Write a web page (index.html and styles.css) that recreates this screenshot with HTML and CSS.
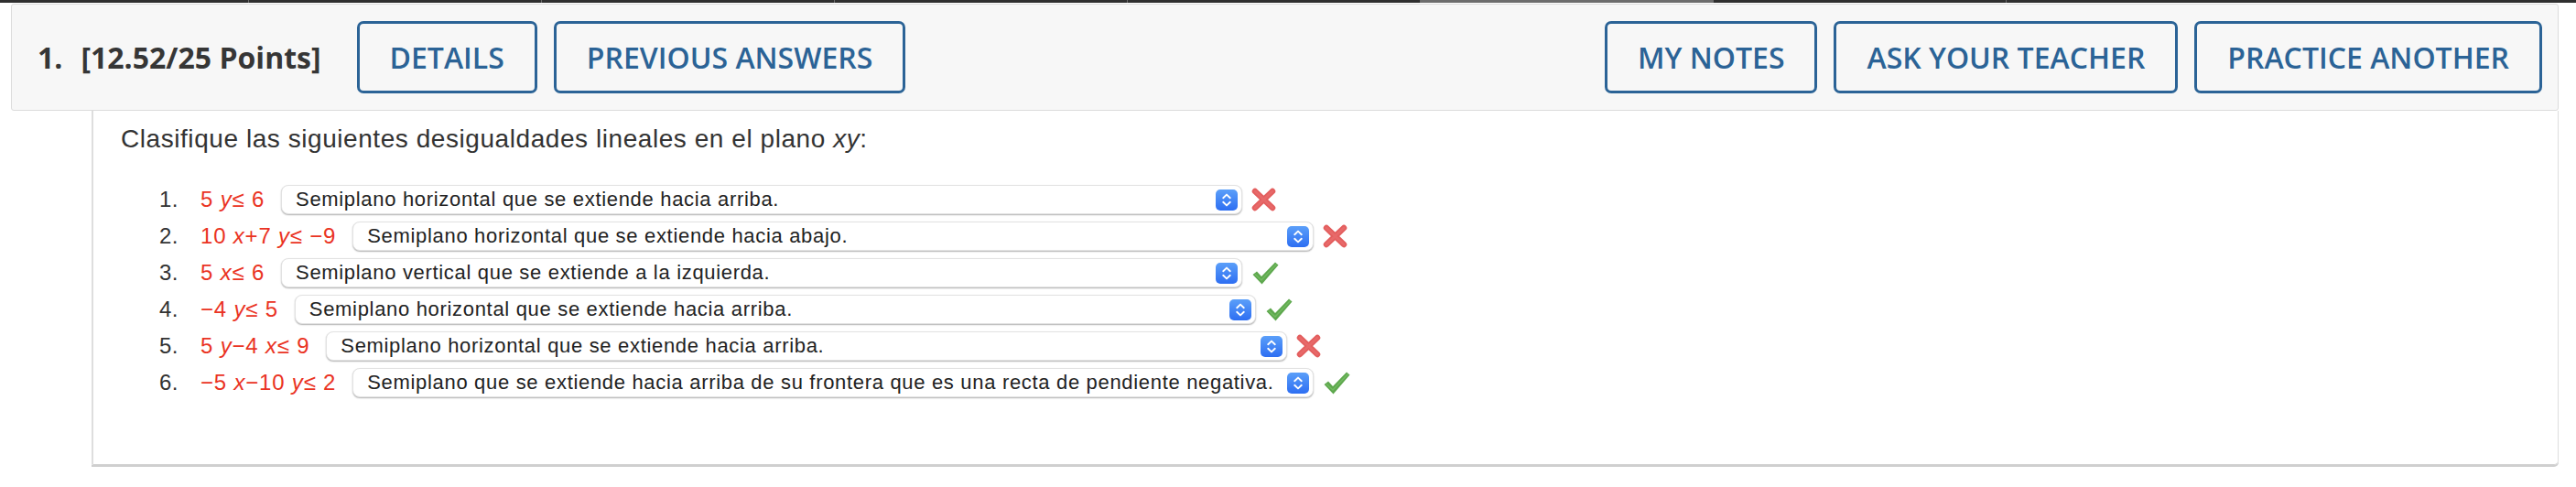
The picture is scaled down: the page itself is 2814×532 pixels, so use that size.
FILE: index.html
```html
<!DOCTYPE html>
<html lang="es">
<head>
<meta charset="utf-8">
<title>Pregunta 1</title>
<link rel="stylesheet" href="styles.css">
</head>
<body>
<div class="topbar">
  <span class="seg seg-first"></span>
  <span class="seg"></span>
  <span class="seg"></span>
  <span class="seg"></span>
  <span class="seg"></span>
  <span class="seg seg-light"></span>
  <span class="seg"></span>
  <span class="seg seg-last"></span>
</div>
<div class="wrap">
  <div class="header">
    <div class="header-left">
      <div class="qtitle"><span class="qnum">1.</span><span>[12.52/25 Points]</span></div>
      <button class="btn">DETAILS</button>
      <button class="btn">PREVIOUS ANSWERS</button>
    </div>
    <div class="header-right">
      <button class="btn">MY NOTES</button>
      <button class="btn">ASK YOUR TEACHER</button>
      <button class="btn">PRACTICE ANOTHER</button>
    </div>
  </div>
  <div class="card">
    <p class="prompt">Clasifique las siguientes desigualdades lineales en el plano <i>xy</i>:</p>
    <ol class="items">
      <li class="item">
        <span class="num">1.</span>
        <span class="math">5 <i>y</i>≤ 6</span>
        <div class="select"><span class="opt">Semiplano horizontal que se extiende hacia arriba.</span>
          <svg class="stepper" viewBox="0 0 24 23" width="24" height="23"><defs><linearGradient id="g1" x1="0" y1="0" x2="0" y2="1"><stop offset="0" stop-color="#5b9ff9"/><stop offset="1" stop-color="#2d6ef2"/></linearGradient></defs><rect x="0" y="0" width="24" height="23" rx="5" fill="url(#g1)"/><polyline points="8.2,9.2 12,5.6 15.8,9.2" fill="none" stroke="#fff" stroke-width="1.9" stroke-linecap="round" stroke-linejoin="round"/><polyline points="8.2,13.8 12,17.4 15.8,13.8" fill="none" stroke="#fff" stroke-width="1.9" stroke-linecap="round" stroke-linejoin="round"/></svg>
        </div>
        <svg class="mark" viewBox="0 0 30 26" width="30" height="26"><path d="M4 4 L23 22 M23 4 L4 22" stroke="#e35d5d" stroke-width="6.5" stroke-linecap="round"/><path d="M4 4 L23 22 M23 4 L4 22" stroke="#ea7272" stroke-width="3" stroke-linecap="round" opacity="0.6"/></svg>
      </li>
      <li class="item">
        <span class="num">2.</span>
        <span class="math">10 <i>x</i>+7 <i>y</i>≤ −9</span>
        <div class="select"><span class="opt">Semiplano horizontal que se extiende hacia abajo.</span>
          <svg class="stepper" viewBox="0 0 24 23" width="24" height="23"><rect x="0" y="0" width="24" height="23" rx="5" fill="url(#g1)"/><polyline points="8.2,9.2 12,5.6 15.8,9.2" fill="none" stroke="#fff" stroke-width="1.9" stroke-linecap="round" stroke-linejoin="round"/><polyline points="8.2,13.8 12,17.4 15.8,13.8" fill="none" stroke="#fff" stroke-width="1.9" stroke-linecap="round" stroke-linejoin="round"/></svg>
        </div>
        <svg class="mark" viewBox="0 0 30 26" width="30" height="26"><path d="M4 4 L23 22 M23 4 L4 22" stroke="#e35d5d" stroke-width="6.5" stroke-linecap="round"/><path d="M4 4 L23 22 M23 4 L4 22" stroke="#ea7272" stroke-width="3" stroke-linecap="round" opacity="0.6"/></svg>
      </li>
      <li class="item">
        <span class="num">3.</span>
        <span class="math">5 <i>x</i>≤ 6</span>
        <div class="select"><span class="opt">Semiplano vertical que se extiende a la izquierda.</span>
          <svg class="stepper" viewBox="0 0 24 23" width="24" height="23"><rect x="0" y="0" width="24" height="23" rx="5" fill="url(#g1)"/><polyline points="8.2,9.2 12,5.6 15.8,9.2" fill="none" stroke="#fff" stroke-width="1.9" stroke-linecap="round" stroke-linejoin="round"/><polyline points="8.2,13.8 12,17.4 15.8,13.8" fill="none" stroke="#fff" stroke-width="1.9" stroke-linecap="round" stroke-linejoin="round"/></svg>
        </div>
        <svg class="mark" viewBox="0 0 30 26" width="30" height="26"><path d="M1.5 15 L6 11.5 L11 17 L26 1.5 L29.5 4.5 L11.5 25.5 Z" fill="#5ea84e"/><path d="M4 14.5 L11 21 L27.5 3.5" fill="none" stroke="#7cc26a" stroke-width="1.4" opacity="0.7"/></svg>
      </li>
      <li class="item">
        <span class="num">4.</span>
        <span class="math">−4 <i>y</i>≤ 5</span>
        <div class="select"><span class="opt">Semiplano horizontal que se extiende hacia arriba.</span>
          <svg class="stepper" viewBox="0 0 24 23" width="24" height="23"><rect x="0" y="0" width="24" height="23" rx="5" fill="url(#g1)"/><polyline points="8.2,9.2 12,5.6 15.8,9.2" fill="none" stroke="#fff" stroke-width="1.9" stroke-linecap="round" stroke-linejoin="round"/><polyline points="8.2,13.8 12,17.4 15.8,13.8" fill="none" stroke="#fff" stroke-width="1.9" stroke-linecap="round" stroke-linejoin="round"/></svg>
        </div>
        <svg class="mark" viewBox="0 0 30 26" width="30" height="26"><path d="M1.5 15 L6 11.5 L11 17 L26 1.5 L29.5 4.5 L11.5 25.5 Z" fill="#5ea84e"/><path d="M4 14.5 L11 21 L27.5 3.5" fill="none" stroke="#7cc26a" stroke-width="1.4" opacity="0.7"/></svg>
      </li>
      <li class="item">
        <span class="num">5.</span>
        <span class="math">5 <i>y</i>−4 <i>x</i>≤ 9</span>
        <div class="select"><span class="opt">Semiplano horizontal que se extiende hacia arriba.</span>
          <svg class="stepper" viewBox="0 0 24 23" width="24" height="23"><rect x="0" y="0" width="24" height="23" rx="5" fill="url(#g1)"/><polyline points="8.2,9.2 12,5.6 15.8,9.2" fill="none" stroke="#fff" stroke-width="1.9" stroke-linecap="round" stroke-linejoin="round"/><polyline points="8.2,13.8 12,17.4 15.8,13.8" fill="none" stroke="#fff" stroke-width="1.9" stroke-linecap="round" stroke-linejoin="round"/></svg>
        </div>
        <svg class="mark" viewBox="0 0 30 26" width="30" height="26"><path d="M4 4 L23 22 M23 4 L4 22" stroke="#e35d5d" stroke-width="6.5" stroke-linecap="round"/><path d="M4 4 L23 22 M23 4 L4 22" stroke="#ea7272" stroke-width="3" stroke-linecap="round" opacity="0.6"/></svg>
      </li>
      <li class="item">
        <span class="num">6.</span>
        <span class="math">−5 <i>x</i>−10 <i>y</i>≤ 2</span>
        <div class="select"><span class="opt">Semiplano que se extiende hacia arriba de su frontera que es una recta de pendiente negativa.</span>
          <svg class="stepper" viewBox="0 0 24 23" width="24" height="23"><rect x="0" y="0" width="24" height="23" rx="5" fill="url(#g1)"/><polyline points="8.2,9.2 12,5.6 15.8,9.2" fill="none" stroke="#fff" stroke-width="1.9" stroke-linecap="round" stroke-linejoin="round"/><polyline points="8.2,13.8 12,17.4 15.8,13.8" fill="none" stroke="#fff" stroke-width="1.9" stroke-linecap="round" stroke-linejoin="round"/></svg>
        </div>
        <svg class="mark" viewBox="0 0 30 26" width="30" height="26"><path d="M1.5 15 L6 11.5 L11 17 L26 1.5 L29.5 4.5 L11.5 25.5 Z" fill="#5ea84e"/><path d="M4 14.5 L11 21 L27.5 3.5" fill="none" stroke="#7cc26a" stroke-width="1.4" opacity="0.7"/></svg>
      </li>
    </ol>
  </div>
</div>
</body>
</html>
```
FILE: styles.css
```css
* { box-sizing: border-box; }
html, body { margin: 0; padding: 0; background: #fff; }
body { width: 2814px; height: 532px; overflow: hidden; }

.topbar {
  display: flex;
  height: 3px;
  background: #333;
}
.seg { width: 320px; height: 3px; background: #2f2f2f; border-left: 1px solid #6a6a6a; }
.seg-first { width: 271px; border-left: none; }
.seg-light { background: #6d6d6d; }
.seg-last { flex: 1; }

.wrap {
  margin: 1px 19px 0 12px;
}

.header {
  display: flex;
  justify-content: space-between;
  align-items: center;
  height: 117px;
  padding: 0 17px 0 28px;
  background: #f7f7f7;
  border: 1px solid #dcdcdc;
  border-radius: 3px;
  font-family: "Open Sans", "Liberation Sans", sans-serif;
}
.header-left, .header-right {
  display: flex;
  align-items: center;
  gap: 18px;
}
.qtitle {
  display: flex;
  align-items: center;
  font-size: 32px;
  font-weight: 700;
  color: #363636;
  margin-right: 21px;
}
.qnum { margin-right: 20px; }

.btn {
  height: 79px;
  padding: 0 33px;
  background: transparent;
  border: 3px solid #2b6396;
  border-radius: 7px;
  color: #2b6396;
  font-family: "Open Sans", "Liberation Sans", sans-serif;
  font-size: 32px;
  font-weight: 600;
  letter-spacing: 0;
  cursor: pointer;
}

.card {
  margin-left: 88px;
  height: 387px;
  padding: 14px 30px 0 30px;
  border-left: 2px solid #dedede;
  border-right: 1px solid #dedede;
  border-bottom: 1px solid #d0d0d0;
  border-bottom-right-radius: 5px;
  box-shadow: 0 2px 0 #cfcfcf;
  font-family: "Liberation Sans", Arial, Helvetica, sans-serif;
  color: #333;
}
.prompt {
  margin: 0;
  font-size: 28px;
  line-height: 34px;
  letter-spacing: 0.56px;
}

.items {
  list-style: none;
  margin: 29px 0 0 0;
  padding: 0;
}
.item {
  display: flex;
  align-items: center;
  height: 40px;
  font-size: 24px;
}
.num {
  width: 63px;
  text-align: right;
  color: #333;
  letter-spacing: 0.5px;
}
.math {
  margin-left: 24px;
  margin-right: 18px;
  color: #ea3323;
  white-space: pre;
  letter-spacing: 0.8px;
}
.math i { font-style: italic; }

.select {
  display: flex;
  align-items: center;
  justify-content: space-between;
  width: 1050px;
  height: 32px;
  padding: 0 4px 0 15px;
  background: #fff;
  border: 1px solid #e2e2e2;
  border-radius: 8px;
  box-shadow: 0 1px 1.5px rgba(0, 0, 0, 0.3);
}
.opt {
  font-size: 22px;
  color: #222;
  white-space: nowrap;
  letter-spacing: 0.68px;
}
.stepper { flex: none; display: block; }
.mark { flex: none; display: block; margin-left: 10px; }
```
